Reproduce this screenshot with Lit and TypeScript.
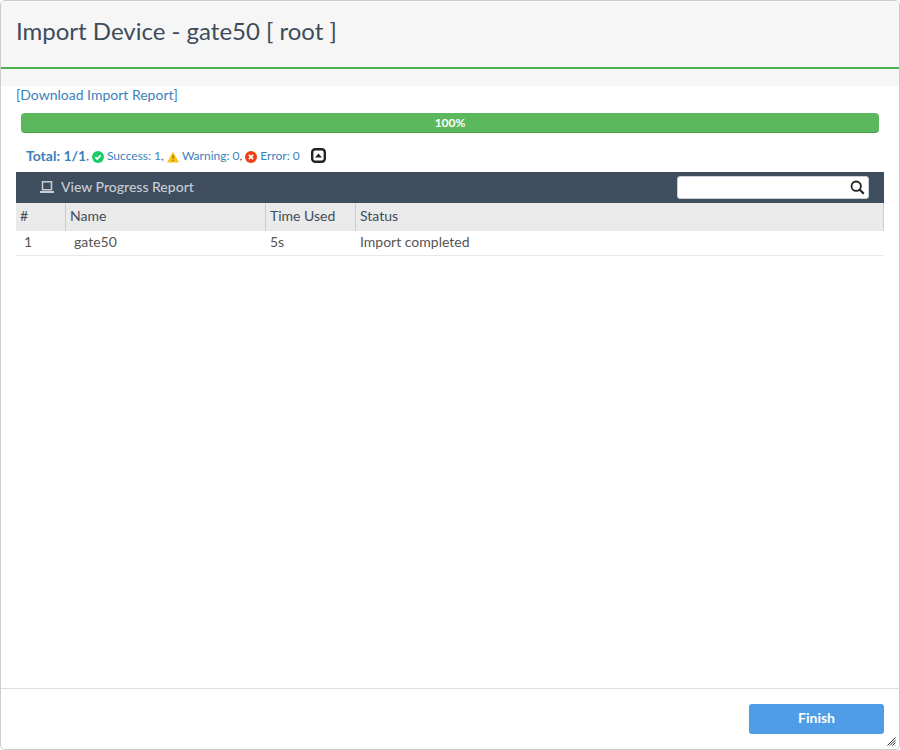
import { LitElement, html, css } from "lit";
import { customElement } from "lit/decorators.js";

@customElement("app-root")
export class AppRoot extends LitElement {
  static styles = css`
    :host { display: block; width: 900px; height: 750px; font-family: Lato, sans-serif; color: #444; }
    * { box-sizing: border-box; }
    .dialog { width: 900px; height: 750px; display: flex; flex-direction: column; background: #fff; border: 1px solid #ccc; border-radius: 5px; position: relative; overflow: hidden; }
    .head { height: 85px; flex: none; background: #f6f6f6; }
    .title { height: 68px; border-bottom: 2px solid #4caf50; padding: 14px 15px 0; font-size: 24px; line-height: 32px; color: #3e4c5a; margin: 0; font-weight: 400; }
    .body { flex: 1; display: flex; flex-direction: column; padding: 0 15px; min-height: 0; }
    .dl { font-size: 14px; line-height: 18px; color: #3d7fbb; height: 18px; }
    .bar { margin: 9px 5px 0; height: 20px; background: #5cb85c; border-bottom: 1px solid #4a9e4a; border-radius: 4px; color: #fff; font-size: 12px; font-weight: 700; line-height: 20px; text-align: center; }
    .summary { display: flex; align-items: center; height: 24px; margin: 10px 0 0 10px; font-size: 12px; color: #3d7fbb; white-space: pre; }
    .total { font-size: 14px; font-weight: 700; }
    .comma { color: #555; }
    .ico { width: 12px; height: 12px; flex: none; margin: 3px 3px 0 0; }
    .toggle { margin-left: 11px; width: 15px; height: 15px; flex: none; }
    .toolbar { height: 31px; margin-top: 5px; background: #3e4e5e; display: flex; align-items: center; padding: 0 15px 0 24px; color: #c8cdd2; font-size: 14px; font-weight: 500; }
    .toolbar svg.lap { width: 14px; height: 14px; margin-right: 7px; margin-top: -2px; }
    .label { flex: 1; padding-bottom: 2px; }
    .search { width: 192px; height: 23px; background: #fff; border: 1px solid #c9ced8; border-radius: 3px; display: flex; align-items: center; justify-content: flex-end; padding-right: 3px; }
    .search svg { width: 15px; height: 15px; }
    .thead, .row { display: grid; grid-template-columns: 50px 200px 90px 1fr; }
    .thead { height: 28px; background: #eaeaea; font-size: 14px; line-height: 26px; color: #3e4c5a; }
    .thead div { padding-left: 4px; border-right: 1px solid #ccc; }
    .row { height: 25px; border-bottom: 1px solid #e8e8e8; font-size: 14px; line-height: 22px; color: #555; }
    .row div { padding-left: 4px; }
    .row div:first-child { padding-left: 8px; }
    .row div:nth-child(2) { padding-left: 8px; }
    .foot { height: 61px; flex: none; border-top: 1px solid #ddd; display: flex; justify-content: flex-end; padding: 15px 15px 0 0; }
    .finish { width: 135px; height: 30px; background: #4f9de6; color: #fff; border: 0; border-radius: 3px; font: 700 14px Lato, sans-serif; padding: 0 0 3px; }
    .grip { position: absolute; right: 3px; bottom: 3px; width: 9px; height: 9px; }
  `;

  render() {
    return html`<div class="dialog">
      <div class="head"><h1 class="title">Import Device - gate50 [ root ]</h1></div>
      <div class="body">
        <div class="dl">[Download Import Report]</div>
        <div class="bar">100%</div>
        <div class="summary">
          <span class="total">Total: 1/1</span><span class="comma">, </span>
          <svg class="ico" viewBox="0 0 13 13"><circle cx="6.5" cy="6.5" r="6.5" fill="#1ecb6b"/><path d="M3.6 6.7l2 2 3.8-4" fill="none" stroke="#fff" stroke-width="1.8"/></svg>
          <span>Success: 1</span><span class="comma">, </span>
          <svg class="ico" viewBox="0 0 13 13"><path d="M6.5.5L13 12.500H0z" fill="#fcc419"/><path d="M6.500 4.500v4M6.500 9.600v1.400" stroke="#7a5c00" stroke-width="1.2"/></svg>
          <span>Warning: 0</span><span class="comma">, </span>
          <svg class="ico" viewBox="0 0 13 13"><circle cx="6.5" cy="6.5" r="6.5" fill="#ee4016"/><path d="M4.200 4.200l4.600 4.600M8.800 4.200L4.200 8.800" stroke="#fff" stroke-width="1.9"/></svg>
          <span>Error: 0</span>
          <svg class="toggle" viewBox="0 0 15 15"><rect x="1.200" y="1.200" width="12.600" height="12.600" rx="3" fill="#fff" stroke="#222" stroke-width="2.400"/><path d="M4 9.500L7.500 5.500l3.500 4z" fill="#222"/></svg>
        </div>
        <div class="toolbar">
          <svg class="lap" viewBox="0 0 14 14"><path d="M2.500 1.700h9v8h-9z" fill="none" stroke="#c8cdd2" stroke-width="1.500"/><path d="M0 11h14v2H0z" fill="#c8cdd2"/></svg>
          <span class="label">View Progress Report</span>
          <div class="search"><svg viewBox="0 0 15 15"><circle cx="6.200" cy="6.200" r="4.700" fill="none" stroke="#222" stroke-width="1.800"/><path d="M9.500 9.500l4.300 4.300" stroke="#222" stroke-width="2.200"/></svg></div>
        </div>
        <div class="thead"><div>#</div><div>Name</div><div>Time Used</div><div>Status</div></div>
        <div class="row"><div>1</div><div>gate50</div><div>5s</div><div>Import completed</div></div>
      </div>
      <div class="foot"><button class="finish">Finish</button></div>
      <svg class="grip" viewBox="0 0 9 9"><path d="M.5 8.500l8-8M3 8.500l5.500-5.500M5.500 8.500l3-3M8 8.500l.5-.5" stroke="#333" stroke-width="1"/></svg>
    </div>`;
  }
}
